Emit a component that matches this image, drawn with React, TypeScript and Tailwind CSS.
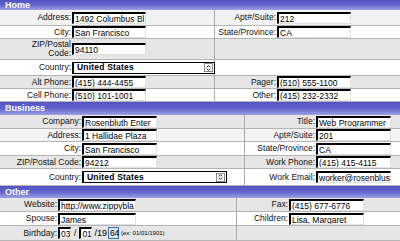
import { ChevronsUpDown } from "lucide-react"

type Cols = { left: string; lw: string; iw: string; rlw: string; riw: string; sw: string }

const home: Cols = { left: "w-[215px]", lw: "w-[72px]", iw: "w-[74px]", rlw: "w-[62px]", riw: "w-[74px]", sw: "w-[143px]" }
const business: Cols = { left: "w-[245px]", lw: "w-[82px]", iw: "w-[75px]", rlw: "w-[71px]", riw: "w-[75px]", sw: "w-[145px]" }
const other: Cols = { left: "w-[237px]", lw: "w-[58px]", iw: "w-[78px]", rlw: "w-[52px]", riw: "w-[75px]", sw: "w-[143px]" }

function Bar({ title, h }: { title: string; h: string }) {
  return (
    <div className={`${h} flex items-center bg-gradient-to-b from-[#5252c4] via-[#6464ce] to-[#a0a0e2] pl-[5px] text-[9px] font-bold leading-none text-white`}>
      {title}
    </div>
  )
}

function Input({ value, w }: { value: string; w: string }) {
  return (
    <div className={`${w} h-[12px] shrink-0 overflow-hidden whitespace-nowrap border-t-2 border-l-2 border-b border-r border-t-black border-l-black border-b-[#e0e0e0] border-r-[#e0e0e0] bg-white pl-[1px] text-[8.5px] leading-[10px] text-black`}>
      {value}
    </div>
  )
}

function Select({ w }: { w: string }) {
  return (
    <div className={`${w} h-[12px] shrink-0 flex items-center justify-between border border-black border-l-2 bg-white pl-[3px] pr-[1px] text-[8.5px] font-bold leading-none text-black`}>
      <span className="tracking-[0.2px]">United States</span>
      <span className="flex h-[9px] w-[9px] items-center justify-center border border-[#888]">
        <ChevronsUpDown className="h-[8px] w-[8px]" strokeWidth={3} />
      </span>
    </div>
  )
}

function Label({ text, w }: { text: string; w: string }) {
  return (
    <div className={`${w} shrink-0 pr-[1px] text-right text-[8.5px] leading-[9px] text-[#111]`}>{text}</div>
  )
}

type RowProps = {
  c: Cols
  h: string
  bg: string
  label: React.ReactNode
  left?: React.ReactNode
  rLabel?: string
  right?: string
}

function Row({ c, h, bg, label, left, rLabel, right }: RowProps) {
  return (
    <div className={`${h} ${bg} flex border-b border-[#b4b4b4]`}>
      <div className={`${c.left} flex shrink-0 items-center border-r border-[#a8a8a8]`}>
        {typeof label === "string" ? <Label text={label} w={c.lw} /> : label}
        {left}
      </div>
      <div className="flex flex-1 items-center">
        {rLabel && <Label text={rLabel} w={c.rlw} />}
        {right !== undefined && <Input value={right} w={c.riw} />}
      </div>
    </div>
  )
}

export default function App() {
  return (
    <div className="h-[241px] w-[400px] overflow-hidden bg-white font-['Liberation_Sans',Arial,sans-serif]">
      <Bar title="Home" h="h-[10px]" />
      <Row c={home} h="h-[16px]" bg="bg-[#f2f2f2]" label="Address:" left={<Input value="1492 Columbus Bl" w={home.iw} />} rLabel="Apt#/Suite:" right="212" />
      <Row c={home} h="h-[13px]" bg="bg-white" label="City:" left={<Input value="San Francisco" w={home.iw} />} rLabel="State/Province:" right="CA" />
      <Row
        c={home}
        h="h-[21px]"
        bg="bg-[#e6e6e6]"
        label={<div className="w-[72px] shrink-0 pr-[1px] text-right text-[8.5px] leading-[9px] text-[#111]">ZIP/Postal<br />Code:</div>}
        left={<Input value="94110" w={home.iw} />}
      />
      <Row c={home} h="h-[16px]" bg="bg-white" label="Country:" left={<Select w={home.sw} />} />
      <Row c={home} h="h-[13px]" bg="bg-[#e6e6e6]" label="Alt Phone:" left={<Input value="(415) 444-4455" w={home.iw} />} rLabel="Pager:" right="(510) 555-1100" />
      <Row c={home} h="h-[13px]" bg="bg-white" label="Cell Phone:" left={<Input value="(510) 101-1001" w={home.iw} />} rLabel="Other:" right="(415) 232-2332" />

      <Bar title="Business" h="h-[13px]" />
      <Row c={business} h="h-[14px]" bg="bg-[#e6e6e6]" label="Company:" left={<Input value="Rosenbluth Enter" w={business.iw} />} rLabel="Title:" right="Web Programmer" />
      <Row c={business} h="h-[13px]" bg="bg-[#f4f4f4]" label="Address:" left={<Input value="1 Hallidae Plaza" w={business.iw} />} rLabel="Apt#/Suite:" right="201" />
      <Row c={business} h="h-[14px]" bg="bg-white" label="City:" left={<Input value="San Francisco" w={business.iw} />} rLabel="State/Province:" right="CA" />
      <Row c={business} h="h-[13px]" bg="bg-[#e6e6e6]" label="ZIP/Postal Code:" left={<Input value="94212" w={business.iw} />} rLabel="Work Phone:" right="(415) 415-4115" />
      <Row c={business} h="h-[17px]" bg="bg-white" label="Country:" left={<Select w={business.sw} />} rLabel="Work Email:" right="worker@rosenblus" />

      <Bar title="Other" h="h-[12px]" />
      <Row c={other} h="h-[14px]" bg="bg-[#e6e6e6]" label="Website:" left={<Input value="http://www.zippybla" w={other.iw} />} rLabel="Fax:" right="(415) 677-6776" />
      <Row c={other} h="h-[14px]" bg="bg-white" label="Spouse:" left={<Input value="James" w={other.iw} />} rLabel="Children:" right="Lisa, Margaret" />
      <Row
        c={other}
        h="h-[15px]"
        bg="bg-[#e6e6e6]"
        label="Birthday:"
        left={
          <div className="flex items-center text-[8.5px] leading-none text-black">
            <Input value="03" w="w-[13px]" />
            <span className="px-[3px]">/</span>
            <Input value="01" w="w-[13px]" />
            <span className="pl-[2px] pr-[1px] text-[9px]">/19</span>
            <div className="h-[12px] w-[11px] border border-[#3a6ea5] bg-[#dbe8f5] pl-[1px] text-[8.5px] leading-[10px]">64</div>
            <span className="pl-[2px] text-[6px]">(ex: 01/01/1901)</span>
          </div>
        }
      />
    </div>
  )
}
